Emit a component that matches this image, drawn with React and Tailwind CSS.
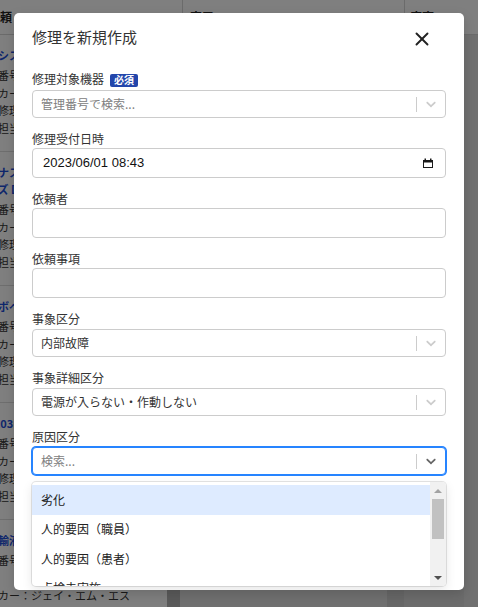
import React from 'react';
import { X } from 'lucide-react';

const cards = [
  {
    title: ['透析システム 2000'],
    lines: ['管理番号：ME-0012', 'メーカー：ニプロ', '前回修理：2022/11/08', '修理担当：臨床工学'],
  },
  {
    title: ['輸液ナスカ ポンプ', 'イーズ DX-200'],
    lines: ['管理番号：ME-0045', 'メーカー：テルモ', '前回修理：2023/02/14', '修理担当：臨床工学'],
  },
  {
    title: ['小型ボペット'],
    lines: ['管理番号：ME-0101', 'メーカー：大研医器', '前回修理：2021/09/30', '修理担当：臨床工学'],
  },
  {
    title: ['TE-203F 輸液ポンプ'],
    lines: ['管理番号：ME-0230', 'メーカー：テルモ', '前回修理：2022/06/21', '修理担当：臨床工学'],
  },
  {
    title: ['新型輸液セット'],
    lines: ['管理番号：ME-0318', 'メモ', 'メーカー：ジェイ・エム・エス', '前回修理：2023/04/02'],
  },
];

function Chevron() {
  return (
    <svg width="16" height="16" viewBox="0 0 20 20" fill="currentColor" aria-hidden="true">
      <path d="M4.516 7.548c0.436-0.446 1.043-0.481 1.576 0l3.908 3.747 3.908-3.747c0.533-0.481 1.141-0.446 1.574 0 0.436 0.445 0.408 1.197 0 1.615-0.418 0.418-4.695 4.502-4.695 4.502-0.217 0.223-0.502 0.335-0.787 0.335s-0.57-0.112-0.789-0.335c0 0-4.287-4.084-4.695-4.502s-0.436-1.17 0-1.615z" />
    </svg>
  );
}

function CalendarIcon() {
  return (
    <svg width="10" height="10" viewBox="0 0 10 10" aria-hidden="true">
      <rect x="0.5" y="2.5" width="9" height="7" fill="none" stroke="#1a1a1a" strokeWidth="1" />
      <rect x="0" y="2" width="10" height="2.5" fill="#1a1a1a" />
      <rect x="1.5" y="0.5" width="1.5" height="2" fill="#1a1a1a" />
      <rect x="7" y="0.5" width="1.5" height="2" fill="#1a1a1a" />
    </svg>
  );
}

function Label({ children, required }) {
  return (
    <div className={`flex items-center ${required ? 'h-[20px]' : 'h-[18px]'}`}>
      <span className="text-[12px] leading-[18px] text-[#333333]">{children}</span>
      {required && (
        <span className="ml-[6px] mt-[2px] flex h-[13px] items-center rounded-[2px] bg-[#2346ab] px-[4px] text-[10px] font-bold leading-none text-white">
          必須
        </span>
      )}
    </div>
  );
}

function SelectBox({ value, placeholder, focused }) {
  return (
    <div
      className={`flex h-[28px] items-center rounded-[4px] border bg-white ${
        focused ? 'border-[#2684ff] shadow-[0_0_0_1px_#2684ff]' : 'border-[#cccccc]'
      }`}
    >
      <div className={`flex-1 truncate pl-[8px] text-[12px] ${value ? 'text-[#333333]' : 'text-[#808080]'}`}>
        {value || placeholder}
      </div>
      <span className="my-[5.5px] w-px self-stretch bg-[#cccccc]" />
      <div className={`flex px-[6px] ${focused ? 'text-[#666666]' : 'text-[#cccccc]'}`}>
        <Chevron />
      </div>
    </div>
  );
}

function TextBox() {
  return <div className="h-[30px] rounded-[4px] border border-[#cccccc] bg-white" />;
}

function Field({ label, required, children, select }) {
  return (
    <div className="flex flex-col">
      <div className={select ? 'mb-[1px]' : ''}>
        <Label required={required}>{label}</Label>
      </div>
      {children}
    </div>
  );
}

function Board() {
  return (
    <div className="absolute inset-0 overflow-hidden bg-[#e0e0e0]">
      <div className="-ml-[36px] w-[540px]">
        {/* Column headers */}
        <div className="flex h-[35px] border-b border-[#d6d6d6] bg-white text-[12px]">
          <div className="flex w-[219px] items-center justify-between border-r border-[#d6d6d6] pl-[24px] pr-[6px]">
            <span className="font-bold text-[#222222]">依頼</span>
            <span className="text-[#555555]">6</span>
          </div>
          <div className="flex w-[222px] items-center justify-between border-r border-[#d6d6d6] pl-[7px] pr-[8px]">
            <span className="font-bold text-[#222222]">完了</span>
            <span className="text-[#555555]">0</span>
          </div>
          <div className="flex flex-1 items-center pl-[5px]">
            <span className="font-bold text-[#222222]">廃棄</span>
          </div>
        </div>

        {/* Columns */}
        <div className="flex h-[572px]">
          <div className="w-[203px] bg-white">
            {cards.map((card, i) => (
              <div key={i} className="border-b border-[#dddddd] px-[12px] pb-[14px] pt-[12px]">
                <div className="mb-[3px] text-[11px] font-bold leading-[17px] text-[#1d4ed8]">
                  {card.title.map((t) => (
                    <div key={t} className="whitespace-nowrap">{t}</div>
                  ))}
                </div>
                {card.lines.map((line) => (
                  <div key={line} className="whitespace-nowrap text-[11px] leading-[17.5px] text-[#333333]">
                    {line}
                  </div>
                ))}
              </div>
            ))}
          </div>
          <div className="w-[13px] bg-[#b4b4b4]" />
          <div className="w-[207px] bg-[#e0e0e0]" />
          <div className="w-[17px] bg-[#cecece]" />
          <div className="w-[60px] bg-[#d9d9d9]" />
          <div className="flex-1 bg-[#e0e0e0]" />
        </div>
      </div>
    </div>
  );
}

function CauseMenu() {
  const options = ['劣化', '人的要因（職員）', '人的要因（患者）', '点検未実施'];
  return (
    <div className="absolute left-0 right-0 top-[35px] z-10 flex h-[104px] overflow-hidden rounded-[4px] bg-white shadow-[0_0_0_1px_rgba(0,0,0,0.1),0_4px_11px_rgba(0,0,0,0.1)]">
      <div className="flex-1 overflow-hidden pt-[3px]">
        {options.map((opt, i) => (
          <div
            key={opt}
            className={`flex h-[29.5px] items-center pl-[9px] text-[12px] text-[#222222] ${i === 0 ? 'bg-[#deebff]' : ''}`}
          >
            {opt}
          </div>
        ))}
      </div>
      {/* Scrollbar */}
      <div className="flex w-[16px] flex-col bg-[#f1f1f1]">
        <div className="flex h-[17px] items-center justify-center">
          <span className="h-0 w-0 border-x-[4px] border-b-[4px] border-x-transparent border-b-[#a3a3a3]" />
        </div>
        <div className="ml-[2px] h-[40px] w-[12px] bg-[#c1c1c1]" />
        <div className="flex-1" />
        <div className="flex h-[17px] items-center justify-center">
          <span className="h-0 w-0 border-x-[4px] border-t-[4px] border-x-transparent border-t-[#505050]" />
        </div>
      </div>
    </div>
  );
}

export default function App() {
  return (
    <div className="relative h-[607px] w-[478px] overflow-hidden font-['Noto_Sans_CJK_JP',sans-serif]">
      <Board />

      {/* Overlay */}
      <div className="absolute inset-0 bg-black/50 pl-[14px] pt-[13px]">
        <div className="h-[577px] w-[450px] overflow-hidden rounded-[5px] bg-white shadow-[0_4px_12px_rgba(0,0,0,0.15)]">
          {/* Header */}
          <div className="flex h-[35px] items-start justify-between pl-[18px] pr-[31px] pt-[13px]">
            <h2 className="text-[15px] font-normal leading-[22px] text-[#333333]">修理を新規作成</h2>
            <button className="mt-[2px] flex h-[22px] w-[22px] items-center justify-center text-[#222222]">
              <X size={22} strokeWidth={2.1} />
            </button>
          </div>

          {/* Form */}
          <div className="mt-[21px] flex flex-col gap-[12px] px-[18px]">
            <Field label="修理対象機器" required select>
              <SelectBox placeholder="管理番号で検索..." />
            </Field>

            <Field label="修理受付日時">
              <div className="flex h-[30px] items-center justify-between rounded-[4px] border border-[#cccccc] bg-white pl-[10px] pr-[12px]">
                <span className="font-['Liberation_Sans',sans-serif] text-[13px] text-[#111111]">2023/06/01 08:43</span>
                <CalendarIcon />
              </div>
            </Field>

            <Field label="依頼者">
              <TextBox />
            </Field>

            <Field label="依頼事項">
              <TextBox />
            </Field>

            <Field label="事象区分" select>
              <SelectBox value="内部故障" />
            </Field>

            <Field label="事象詳細区分" select>
              <SelectBox value="電源が入らない・作動しない" />
            </Field>

            <Field label="原因区分" select>
              <div className="relative">
                <SelectBox placeholder="検索..." focused />
                <CauseMenu />
              </div>
            </Field>
          </div>
        </div>
      </div>
    </div>
  );
}
